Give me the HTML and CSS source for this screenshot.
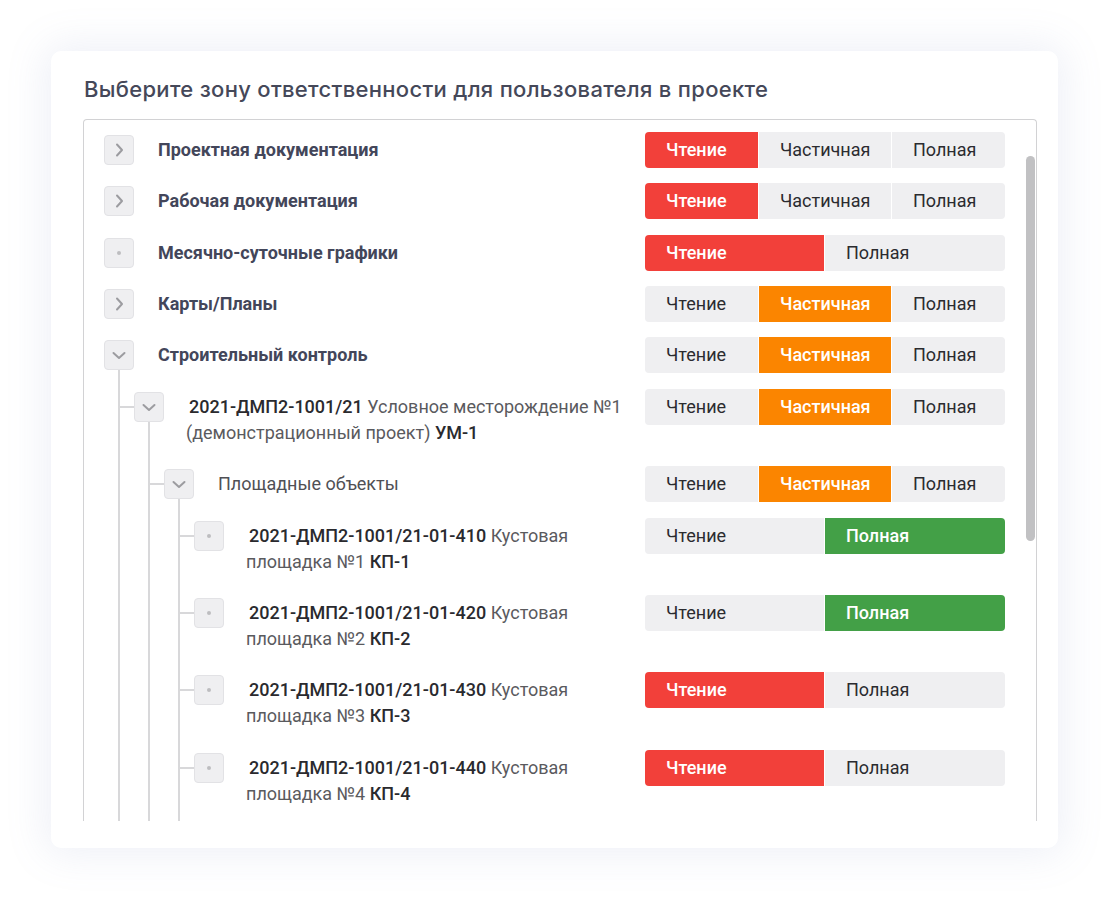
FILE: index.html
```html
<!DOCTYPE html>
<html lang="ru">
<head>
<meta charset="utf-8">
<title>Зона ответственности</title>
<link rel="stylesheet" href="styles.css">
</head>
<body>
<div class="card">
  <h1 class="title">Выберите зону ответственности для пользователя в проекте</h1>
  <div class="tree-box">
    <div class="tree-scroll">
      <ul class="tree">
        <li class="node">
          <div class="row">
            <span class="exp"><svg viewBox="0 0 30 30" width="30" height="30"><path d="M13 9.5 L18 15 L13 20.5" /></svg></span>
            <div class="label strong">Проектная документация</div>
            <div class="seg"><span class="opt w1 red">Чтение</span><span class="opt w2">Частичная</span><span class="opt w3">Полная</span></div>
          </div>
        </li>
        <li class="node">
          <div class="row">
            <span class="exp"><svg viewBox="0 0 30 30" width="30" height="30"><path d="M13 9.5 L18 15 L13 20.5" /></svg></span>
            <div class="label strong">Рабочая документация</div>
            <div class="seg"><span class="opt w1 red">Чтение</span><span class="opt w2">Частичная</span><span class="opt w3">Полная</span></div>
          </div>
        </li>
        <li class="node">
          <div class="row">
            <span class="exp"><span class="dot"></span></span>
            <div class="label strong">Месячно-суточные графики</div>
            <div class="seg"><span class="opt h1 red">Чтение</span><span class="opt h2">Полная</span></div>
          </div>
        </li>
        <li class="node">
          <div class="row">
            <span class="exp"><svg viewBox="0 0 30 30" width="30" height="30"><path d="M13 9.5 L18 15 L13 20.5" /></svg></span>
            <div class="label strong">Карты/Планы</div>
            <div class="seg"><span class="opt w1">Чтение</span><span class="opt w2 orange">Частичная</span><span class="opt w3">Полная</span></div>
          </div>
        </li>
        <li class="node open">
          <div class="row">
            <span class="exp"><svg viewBox="0 0 30 30" width="30" height="30"><path d="M9.5 13 L15 18 L20.5 13" /></svg></span>
            <div class="label strong">Строительный контроль</div>
            <div class="seg"><span class="opt w1">Чтение</span><span class="opt w2 orange">Частичная</span><span class="opt w3">Полная</span></div>
          </div>
          <ul class="children">
            <li class="node open">
              <div class="row">
                <span class="exp"><svg viewBox="0 0 30 30" width="30" height="30"><path d="M9.5 13 L15 18 L20.5 13" /></svg></span>
                <div class="label"><span class="code">2021-ДМП2-1001/21</span> Условное месторождение №1 (демонстрационный проект) <span class="code">УМ-1</span></div>
                <div class="seg"><span class="opt w1">Чтение</span><span class="opt w2 orange">Частичная</span><span class="opt w3">Полная</span></div>
              </div>
              <ul class="children">
                <li class="node open">
                  <div class="row">
                    <span class="exp"><svg viewBox="0 0 30 30" width="30" height="30"><path d="M9.5 13 L15 18 L20.5 13" /></svg></span>
                    <div class="label plain">Площадные объекты</div>
                    <div class="seg"><span class="opt w1">Чтение</span><span class="opt w2 orange">Частичная</span><span class="opt w3">Полная</span></div>
                  </div>
                  <ul class="children">
                    <li class="node">
                      <div class="row">
                        <span class="exp"><span class="dot"></span></span>
                        <div class="label"><span class="code">2021-ДМП2-1001/21-01-410</span> Кустовая площадка №1 <span class="code">КП-1</span></div>
                        <div class="seg"><span class="opt h1">Чтение</span><span class="opt h2 green">Полная</span></div>
                      </div>
                    </li>
                    <li class="node">
                      <div class="row">
                        <span class="exp"><span class="dot"></span></span>
                        <div class="label"><span class="code">2021-ДМП2-1001/21-01-420</span> Кустовая площадка №2 <span class="code">КП-2</span></div>
                        <div class="seg"><span class="opt h1">Чтение</span><span class="opt h2 green">Полная</span></div>
                      </div>
                    </li>
                    <li class="node">
                      <div class="row">
                        <span class="exp"><span class="dot"></span></span>
                        <div class="label"><span class="code">2021-ДМП2-1001/21-01-430</span> Кустовая площадка №3 <span class="code">КП-3</span></div>
                        <div class="seg"><span class="opt h1 red">Чтение</span><span class="opt h2">Полная</span></div>
                      </div>
                    </li>
                    <li class="node">
                      <div class="row">
                        <span class="exp"><span class="dot"></span></span>
                        <div class="label"><span class="code">2021-ДМП2-1001/21-01-440</span> Кустовая площадка №4 <span class="code">КП-4</span></div>
                        <div class="seg"><span class="opt h1 red">Чтение</span><span class="opt h2">Полная</span></div>
                      </div>
                    </li>
                    <li class="node">
                      <div class="row">
                        <span class="exp"><span class="dot"></span></span>
                        <div class="label"><span class="code">2021-ДМП2-1001/21-01-450</span> Кустовая площадка №5 <span class="code">КП-5</span></div>
                        <div class="seg"><span class="opt h1 red">Чтение</span><span class="opt h2">Полная</span></div>
                      </div>
                    </li>
                  </ul>
                </li>
              </ul>
            </li>
          </ul>
        </li>
      </ul>
    </div>
    <div class="thumb"></div>
  </div>
</div>
</body>
</html>
```

FILE: styles.css
```css
* { box-sizing: border-box; }

html, body {
  margin: 0;
  background: #ffffff;
}

body {
  padding: 51px;
  font-family: Roboto, "Liberation Sans", sans-serif;
}

.card {
  width: 1007px;
  height: 797px;
  background: #fff;
  border-radius: 10px;
  box-shadow: 0 0 40px 6px rgba(120, 140, 190, 0.13);
  padding: 26px 21px 27px 32px;
  display: flex;
  flex-direction: column;
}

.title {
  margin: 0 0 18px 1px;
  font-family: Inter, "Noto Sans", sans-serif;
  font-size: 22px;
  line-height: 24px;
  font-weight: 500;
  letter-spacing: 0.3px;
  color: #454859;
}

.tree-box {
  position: relative;
  flex: 1;
  border: 1px solid #d2d2d4;
  border-bottom: none;
  border-radius: 4px 4px 0 0;
  overflow: hidden;
}

.tree-scroll {
  height: 100%;
  overflow: hidden;
  padding: 4.3px 31px 0 20px;
}

.tree, .children {
  list-style: none;
  margin: 0;
  padding: 0;
}

.children {
  padding-left: 30px;
}

.node {
  position: relative;
}

.node.open::after {
  content: "";
  position: absolute;
  left: 14px;
  top: 40.7px;
  bottom: 0;
  width: 2px;
  background: #d8d8da;
}

.children > .node::before {
  content: "";
  position: absolute;
  left: -14px;
  top: 24.7px;
  width: 14px;
  height: 2px;
  background: #d8d8da;
}

.row {
  display: flex;
  align-items: flex-start;
  padding: 12.7px 0;
}

.exp {
  flex: none;
  width: 30px;
  height: 30px;
  margin: -2px 0 -2px;
  border-radius: 4px;
  background: #efeff1;
  border: 1px solid #e2e2e5;
  display: flex;
  align-items: center;
  justify-content: center;
}

.exp svg {
  display: block;
  margin: -1px;
}

.exp path {
  fill: none;
  stroke: #9c9ca0;
  stroke-width: 2;
  stroke-linecap: round;
  stroke-linejoin: round;
}

.dot {
  width: 4px;
  height: 4px;
  border-radius: 50%;
  background: #bdbdc0;
}

.label {
  flex: 1;
  min-width: 0;
  margin-left: 22px;
  font-size: 18px;
  line-height: 26px;
  color: #5a5a5e;
  text-indent: 3px;
}

.label.strong {
  margin-left: 24px;
  text-indent: 0;
  font-weight: 700;
  color: #43465a;
}

.label.plain {
  margin-left: 24px;
  text-indent: 0;
  color: #505055;
}

.code {
  font-weight: 500;
  color: #2a2a2e;
}

.seg {
  flex: none;
  width: 360px;
  height: 36px;
  margin: -5px 0 -5px 15px;
  display: flex;
  gap: 1px;
  border-radius: 4px;
  overflow: hidden;
  background: #fff;
}

.opt {
  display: block;
  height: 36px;
  line-height: 36px;
  padding-left: 21px;
  background: #efeff1;
  font-size: 18px;
  color: #2b2b2f;
  white-space: nowrap;
}

.w1 { width: 113px; }
.w2 { width: 132px; }
.w3 { width: 113px; }
.h1 { width: 179px; }
.h2 { width: 180px; }

.opt.red,
.opt.orange,
.opt.green {
  color: #fff;
  font-weight: 500;
}

.opt.red { background: #f2403a; }
.opt.orange { background: #fb8500; }
.opt.green { background: #43a047; }

.thumb {
  position: absolute;
  right: 1px;
  top: 36px;
  width: 9px;
  height: 385px;
  border-radius: 5px;
  background: #c1c1c3;
}
```
